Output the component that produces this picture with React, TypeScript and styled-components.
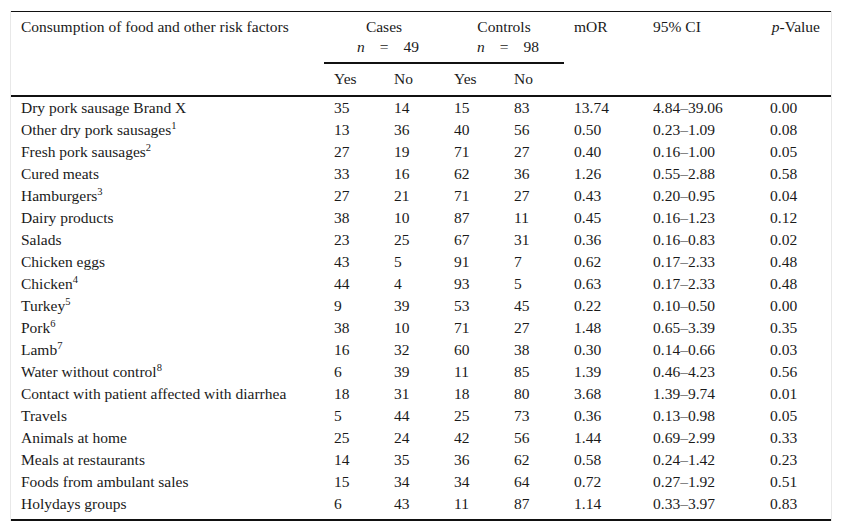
import React from 'react'
import styled, { createGlobalStyle } from 'styled-components'

const GlobalStyle = createGlobalStyle`
  html, body {
    margin: 0;
    padding: 0;
    background: #fff;
  }
  body {
    font-family: "Liberation Serif", "Times New Roman", serif;
    color: #1a1a1a;
  }
`

const Page = styled.div`
  padding: 11px 0 0 10px;
`

const Frame = styled.div`
  width: 820px;
  border-left: 1px solid #e8e8e8;
  border-right: 1px solid #e8e8e8;
`

const Table = styled.table`
  width: 100%;
  border-collapse: collapse;
  border-top: 1px solid #111;
  border-bottom: 2px solid #111;
  font-size: 15.5px;
  line-height: 18px;
  table-layout: fixed;
`

const Head = styled.thead`
  border-bottom: 2px solid #111;
`

const HeadCell = styled.th<{ $rule?: boolean; $right?: boolean }>`
  font-weight: normal;
  text-align: ${(p) => (p.$right ? 'right' : 'left')};
  vertical-align: top;
  padding: ${(p) => (p.$rule ? '6px 0 0 10px' : '6px 0 0 10px')};
  padding-right: ${(p) => (p.$right ? '11px' : '0')};
  border-top: ${(p) => (p.$rule ? '2px solid #111' : 'none')};
  height: ${(p) => (p.$rule ? '25px' : '44px')};
`

const GroupCell = styled(HeadCell)`
  text-align: center;
  padding: 6px 0 0 0;
`

const CountLine = styled.div`
  margin-top: 2px;
  display: flex;
  justify-content: center;
  gap: 15px;
  padding-left: 8px;
  i {
    font-style: italic;
  }
`

const Cell = styled.td<{ $last?: boolean }>`
  padding: ${(p) => (p.$last ? '2px 0 6px 10px' : '2px 0 2px 10px')};
  height: 18px;
  vertical-align: top;
  white-space: nowrap;
  sup {
    font-size: 10.5px;
    line-height: 0;
  }
`

type Row = {
  label: string
  note?: string
  values: string[]
}

const rows: Row[] = [
  { label: 'Dry pork sausage Brand X', values: ['35', '14', '15', '83', '13.74', '4.84–39.06', '0.00'] },
  { label: 'Other dry pork sausages', note: '1', values: ['13', '36', '40', '56', '0.50', '0.23–1.09', '0.08'] },
  { label: 'Fresh pork sausages', note: '2', values: ['27', '19', '71', '27', '0.40', '0.16–1.00', '0.05'] },
  { label: 'Cured meats', values: ['33', '16', '62', '36', '1.26', '0.55–2.88', '0.58'] },
  { label: 'Hamburgers', note: '3', values: ['27', '21', '71', '27', '0.43', '0.20–0.95', '0.04'] },
  { label: 'Dairy products', values: ['38', '10', '87', '11', '0.45', '0.16–1.23', '0.12'] },
  { label: 'Salads', values: ['23', '25', '67', '31', '0.36', '0.16–0.83', '0.02'] },
  { label: 'Chicken eggs', values: ['43', '5', '91', '7', '0.62', '0.17–2.33', '0.48'] },
  { label: 'Chicken', note: '4', values: ['44', '4', '93', '5', '0.63', '0.17–2.33', '0.48'] },
  { label: 'Turkey', note: '5', values: ['9', '39', '53', '45', '0.22', '0.10–0.50', '0.00'] },
  { label: 'Pork', note: '6', values: ['38', '10', '71', '27', '1.48', '0.65–3.39', '0.35'] },
  { label: 'Lamb', note: '7', values: ['16', '32', '60', '38', '0.30', '0.14–0.66', '0.03'] },
  { label: 'Water without control', note: '8', values: ['6', '39', '11', '85', '1.39', '0.46–4.23', '0.56'] },
  { label: 'Contact with patient affected with diarrhea', values: ['18', '31', '18', '80', '3.68', '1.39–9.74', '0.01'] },
  { label: 'Travels', values: ['5', '44', '25', '73', '0.36', '0.13–0.98', '0.05'] },
  { label: 'Animals at home', values: ['25', '24', '42', '56', '1.44', '0.69–2.99', '0.33'] },
  { label: 'Meals at restaurants', values: ['14', '35', '36', '62', '0.58', '0.24–1.42', '0.23'] },
  { label: 'Foods from ambulant sales', values: ['15', '34', '34', '64', '0.72', '0.27–1.92', '0.51'] },
  { label: 'Holydays groups', values: ['6', '43', '11', '87', '1.14', '0.33–3.97', '0.83'] },
]

const widths = [313, 60, 60, 60, 60, 79, 117, 71]

export default function App() {
  return (
    <Page>
      <GlobalStyle />
      <Frame>
        <Table>
          <colgroup>
            {widths.map((w, i) => (
              <col key={i} style={{ width: w }} />
            ))}
          </colgroup>
          <Head>
            <tr>
              <HeadCell rowSpan={2}>Consumption of food and other risk factors</HeadCell>
              <GroupCell colSpan={2}>
                Cases
                <CountLine>
                  <i>n</i>
                  <span>=</span>
                  <span>49</span>
                </CountLine>
              </GroupCell>
              <GroupCell colSpan={2}>
                Controls
                <CountLine>
                  <i>n</i>
                  <span>=</span>
                  <span>98</span>
                </CountLine>
              </GroupCell>
              <HeadCell rowSpan={2}>mOR</HeadCell>
              <HeadCell rowSpan={2}>95% CI</HeadCell>
              <HeadCell rowSpan={2} $right>
                <i>p</i>-Value
              </HeadCell>
            </tr>
            <tr>
              <HeadCell $rule>Yes</HeadCell>
              <HeadCell $rule>No</HeadCell>
              <HeadCell $rule>Yes</HeadCell>
              <HeadCell $rule>No</HeadCell>
            </tr>
          </Head>
          <tbody>
            {rows.map((r, i) => {
              const last = i === rows.length - 1
              return (
                <tr key={r.label}>
                  <Cell $last={last}>
                    {r.label}
                    {r.note && <sup>{r.note}</sup>}
                  </Cell>
                  {r.values.map((v, j) => (
                    <Cell key={j} $last={last}>
                      {v}
                    </Cell>
                  ))}
                </tr>
              )
            })}
          </tbody>
        </Table>
      </Frame>
    </Page>
  )
}
